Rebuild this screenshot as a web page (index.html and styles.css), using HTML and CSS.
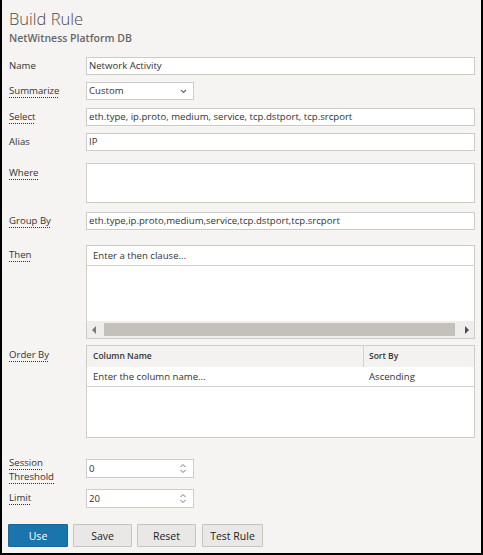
FILE: index.html
```html
<!DOCTYPE html>
<html>
<head>
<meta charset="utf-8">
<link rel="stylesheet" href="styles.css">
</head>
<body>
<div class="panel">
  <h1 class="title">Build Rule</h1>
  <div class="subtitle">NetWitness Platform DB</div>

  <div class="row r-name">
    <label class="lbl">Name</label>
    <div class="input">Network Activity</div>
  </div>
  <div class="row r-sum">
    <label class="lbl"><span class="dot">Summarize</span></label>
    <div class="input short select">Custom
      <svg class="chev" width="7" height="5" viewBox="0 0 7 5"><path d="M1 1 L3.5 3.5 L6 1" fill="none" stroke="#666" stroke-width="1.1"/></svg>
    </div>
  </div>
  <div class="row r-sel">
    <label class="lbl"><span class="dot">Select</span></label>
    <div class="input">eth.type, ip.proto, medium, service, tcp.dstport, tcp.srcport</div>
  </div>
  <div class="row r-alias">
    <label class="lbl">Alias</label>
    <div class="input">IP</div>
  </div>
  <div class="row r-where">
    <label class="lbl lbl-top"><span class="dot">Where</span></label>
    <div class="input area"></div>
  </div>
  <div class="row r-group">
    <label class="lbl"><span class="dot">Group By</span></label>
    <div class="input">eth.type,ip.proto,medium,service,tcp.dstport,tcp.srcport</div>
  </div>
  <div class="row r-then">
    <label class="lbl lbl-top"><span class="dot">Then</span></label>
    <div class="then">
      <div class="then-head">Enter a then clause...</div>
      <div class="then-body"></div>
      <div class="hscroll">
        <svg class="arr" width="6" height="8" viewBox="0 0 6 8"><path d="M5 0 L1 4 L5 8 Z" fill="#7a7a7a"/></svg>
        <div class="thumb"></div>
        <svg class="arr" width="6" height="8" viewBox="0 0 6 8"><path d="M1 0 L5 4 L1 8 Z" fill="#505050"/></svg>
      </div>
    </div>
  </div>
  <div class="row r-order">
    <label class="lbl lbl-top"><span class="dot">Order By</span></label>
    <div class="table">
      <div class="thead">
        <div class="c1">Column Name</div>
        <div class="c2">Sort By</div>
      </div>
      <div class="trow">
        <div class="c1">Enter the column name...</div>
        <div class="c2">Ascending</div>
      </div>
      <div class="tempty"></div>
    </div>
  </div>
  <div class="row r-sess">
    <label class="lbl lbl-two"><span class="dot">Session</span><br><span class="dot">Threshold</span></label>
    <div class="input short spin">0
      <svg class="spinner" width="8" height="11" viewBox="0 0 8 11"><path d="M1.5 4 L4 1.5 L6.5 4 M1.5 7 L4 9.5 L6.5 7" fill="none" stroke="#777" stroke-width="1"/></svg>
    </div>
  </div>
  <div class="row r-limit">
    <label class="lbl"><span class="dot">Limit</span></label>
    <div class="input short spin">20
      <svg class="spinner" width="8" height="11" viewBox="0 0 8 11"><path d="M1.5 4 L4 1.5 L6.5 4 M1.5 7 L4 9.5 L6.5 7" fill="none" stroke="#777" stroke-width="1"/></svg>
    </div>
  </div>

  <div class="buttons">
    <button class="btn primary b-use">Use</button>
    <button class="btn b-save">Save</button>
    <button class="btn b-reset">Reset</button>
    <button class="btn b-test">Test Rule</button>
  </div>
</div>
</body>
</html>
```

FILE: styles.css
```css
* { box-sizing: border-box; }
html, body { margin: 0; padding: 0; }
body {
  width: 483px;
  height: 555px;
  background: #000;
  font-family: "Open Sans", "Noto Sans", sans-serif;
  font-size: 9.6px;
  color: #333;
}
.panel {
  width: 483px;
  height: 555px;
  background: #f5f4f2;
  border-left: 2px solid #000;
  border-right: 2px solid #000;
  border-bottom: 2px solid #000;
  padding: 7px 6px 0 7px;
}
.title {
  margin: 0;
  font-size: 16.5px;
  font-weight: 300;
  color: #4a4a4a;
  line-height: 24px;
}
.subtitle {
  font-size: 10.5px;
  font-weight: 600;
  color: #666;
  line-height: 14px;
  margin-bottom: 12px;
}
.row {
  display: grid;
  grid-template-columns: 77px 1fr;
  align-items: start;
}
.r-sum { margin-top: 7px; }
.r-sel { margin-top: 8px; }
.r-alias { margin-top: 7px; }
.r-where { margin-top: 12px; }
.r-group { margin-top: 9px; }
.r-then { margin-top: 15px; }
.r-order { margin-top: 6px; }
.r-sess { margin-top: 21px; }
.r-limit { margin-top: 11px; }

.lbl {
  line-height: 18px;
  color: #333;
  font-size: 9.6px;
}
.lbl-top { padding-top: 1px; }
.lbl-two { line-height: 14px; margin-top: -3px; margin-bottom: -9px; }
.dot {
  text-decoration: underline dotted #333;
  text-underline-offset: 3px;
  text-decoration-thickness: 1px;
}
.input {
  position: relative;
  height: 18px;
  background: #fff;
  border: 1px solid #cfccc8;
  padding: 0 2px;
  line-height: 16px;
  font-size: 9.6px;
  color: #333;
  white-space: nowrap;
  overflow: hidden;
}
.short { width: 108px; }
.spin { height: 19px; line-height: 17px; }
.area { height: 40px; }
.chev { position: absolute; right: 6px; top: 6px; }
.spinner { position: absolute; right: 6px; top: 3px; }

.then {
  height: 94px;
  border: 1px solid #cfccc8;
  background: #fff;
  display: flex;
  flex-direction: column;
}
.then-head {
  height: 20px;
  line-height: 19px;
  padding-left: 6px;
  border-bottom: 1px solid #d4d1cd;
}
.then-body { flex: 1; }
.hscroll {
  height: 17px;
  background: #efeeec;
  display: flex;
  align-items: center;
  padding: 0 4px 0 4px;
}
.hscroll .arr { flex: none; }
.thumb {
  flex: 1;
  height: 13px;
  background: #c4c1bc;
  margin: 0 9px 0 7px;
}

.table {
  height: 93px;
  border: 1px solid #cfccc8;
  background: #fff;
  display: flex;
  flex-direction: column;
}
.thead, .trow {
  display: grid;
  grid-template-columns: 276px 1fr;
}
.thead {
  height: 21px;
  background: #f3f2f0;
  font-size: 8.5px;
  font-weight: 600;
  line-height: 20px;
  color: #333;
}
.thead .c2 { border-left: 1px solid #d4d1cd; }
.c1 { padding-left: 6px; }
.c2 { padding-left: 5px; }
.trow {
  height: 20px;
  line-height: 19px;
  border-bottom: 1px solid #d4d1cd;
}
.trow .c2 { padding-left: 6px; }
.tempty { flex: 1; }

.buttons {
  display: flex;
  margin-top: 16px;
  margin-left: -1px;
}
.btn {
  height: 23px;
  font-family: "Open Sans", "Noto Sans", sans-serif;
  font-size: 10.5px;
  color: #222;
  background: #e9e8e6;
  border: 1px solid #c7c4c0;
  border-radius: 1px;
  padding: 0;
}
.b-use { width: 60px; }
.b-save { width: 59px; margin-left: 5px; }
.b-reset { width: 59px; margin-left: 5px; }
.b-test { width: 61px; margin-left: 6px; }
.primary {
  background: #1a75ad;
  border-color: #1a6699;
  color: #fff;
}
```
